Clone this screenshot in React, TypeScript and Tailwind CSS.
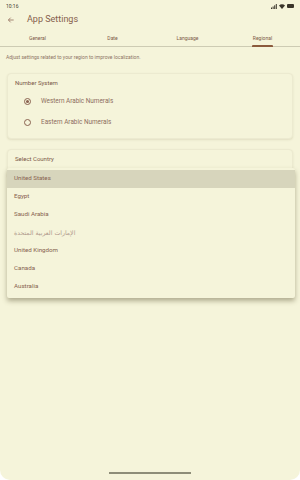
import { useState } from "react";

const countries = [
  "United States",
  "Egypt",
  "Saudi Arabia",
  "الإمارات العربية المتحدة",
  "United Kingdom",
  "Canada",
  "Australia",
];

const tabs = ["General", "Date", "Language", "Regional"];

function Radio({ checked }: { checked: boolean }) {
  return (
    <span className="flex h-[7px] w-[7px] items-center justify-center rounded-full border border-[#8a6250]">
      {checked && <span className="h-[3px] w-[3px] rounded-full bg-[#8a6250]" />}
    </span>
  );
}

export default function App() {
  const [numerals, setNumerals] = useState("western");
  const [country, setCountry] = useState("United States");

  return (
    <div className="h-[480px] w-[300px] bg-white font-['Roboto',sans-serif]">
      <div className="relative flex h-full flex-col overflow-hidden rounded-b-[10px] bg-[#f5f4da] text-[#86604c]">
        {/* status bar */}
        <div className="flex h-[11px] items-center justify-between px-[6px] pt-[1px]">
          <span className="text-[5px] leading-none text-[#3f3a2e]">10:16</span>
          <div className="flex items-center gap-[2px]">
            <svg width="6" height="5" viewBox="0 0 6 5">
              <rect x="0" y="3.5" width="1" height="1.5" fill="#3a352a" />
              <rect x="1.6" y="2.5" width="1" height="2.5" fill="#3a352a" />
              <rect x="3.2" y="1.3" width="1" height="3.7" fill="#3a352a" />
              <rect x="4.8" y="0" width="1" height="5" fill="#3a352a" />
            </svg>
            <svg width="6" height="5" viewBox="0 0 6 5">
              <path d="M0 1.6 A4 4 0 0 1 6 1.6 L3 5 Z" fill="#3a352a" />
            </svg>
            <span className="h-[4px] w-[7px] rounded-[1px] bg-[#3a352a]" />
          </div>
        </div>

        {/* app bar */}
        <div className="flex h-[17px] items-center pl-[7px]">
          <svg width="8" height="8" viewBox="0 0 24 24" fill="none" stroke="#8a6250" strokeWidth="2.2">
            <path d="M20 12H5M11 5l-7 7 7 7" />
          </svg>
          <span className="ml-[12px] text-[9px] leading-none">App Settings</span>
        </div>

        {/* tabs */}
        <div className="mt-[3px] flex h-[16px] border-b border-[#cdcbb3]">
          {tabs.map((t) => (
            <div key={t} className="relative flex flex-1 items-center justify-center text-[5px] text-[#7d5a48]">
              {t}
              {t === "Regional" && (
                <span className="absolute bottom-[-1px] h-[2px] w-[21px] rounded-t-[1px] bg-[#8b5a3c]" />
              )}
            </div>
          ))}
        </div>

        <p className="mt-[6px] px-[6px] text-[5px] leading-[8px] text-[#8d7565]">
          Adjust settings related to your region to improve localization.
        </p>

        {/* number system card */}
        <div className="mx-[7px] mt-[12px] rounded-[4px] border border-[#ecead0] bg-[#f5f4da] px-[7px] pt-[5px] pb-[5px] shadow-[0_1px_2px_rgba(120,110,70,0.15)]">
          <div className="text-[6px] leading-[8px] text-[#7c5848]">Number System</div>
          <div className="mt-[4px] flex flex-col">
            {[
              ["western", "Western Arabic Numerals"],
              ["eastern", "Eastern Arabic Numerals"],
            ].map(([k, label]) => (
              <button
                key={k}
                onClick={() => setNumerals(k)}
                className="flex h-[21px] items-center pl-[9px] text-left"
              >
                <Radio checked={numerals === k} />
                <span className="ml-[10px] text-[6.4px] text-[#8d6e5e]">{label}</span>
              </button>
            ))}
          </div>
        </div>

        {/* country card */}
        <div className="relative mx-[7px] mt-[10px] h-[28px] rounded-[4px] border border-[#ecead0] bg-[#f5f4da] px-[7px] pt-[5px] shadow-[0_1px_2px_rgba(120,110,70,0.15)]">
          <div className="text-[6px] leading-[8px] text-[#7c5848]">Select Country</div>
        </div>

        {/* dropdown menu */}
        <div className="absolute top-[168px] left-[7px] w-[288px] rounded-[2px] bg-[#f5f4da] py-[2px] shadow-[0_3px_5px_rgba(90,85,50,0.45)]">
          {countries.map((c) => (
            <button
              key={c}
              onClick={() => setCountry(c)}
              className={`flex h-[18px] w-full items-center px-[7px] text-left text-[6.2px] ${
                country === c ? "bg-[#d7d5bc]" : ""
              } ${c.startsWith("الإ") ? "font-['DejaVu_Sans',sans-serif] text-[5px] text-[#b09a8c]" : "text-[#87624f]"}`}
            >
              {c}
            </button>
          ))}
        </div>

        <div className="mt-auto mb-[6px] flex justify-center">
          <span className="h-[2px] w-[82px] bg-[#8e8d78]" />
        </div>
      </div>
    </div>
  );
}
